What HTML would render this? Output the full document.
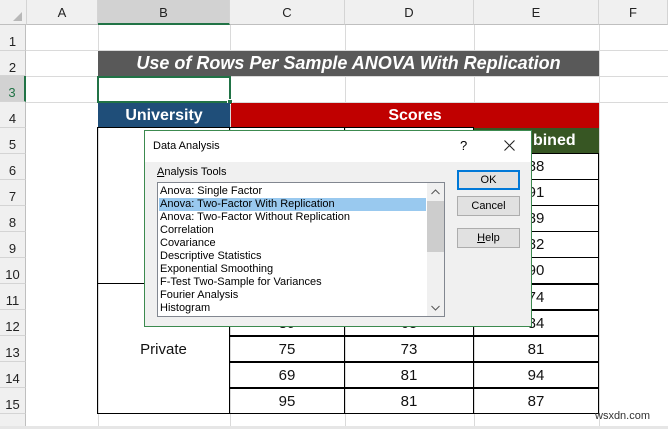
<!DOCTYPE html><html><head><style>
*{margin:0;padding:0;box-sizing:border-box}
body{width:668px;height:429px;overflow:hidden;background:#fff;position:relative;font-family:"Liberation Sans",sans-serif}
div{position:absolute}
.ch{top:0;height:25px;background:#f0f0f0;border-right:1px solid #d4d4d4;border-bottom:1px solid #bfbfbf;text-align:center;line-height:25px;font-size:13px;color:#222}
.rh{left:0;width:26px;background:#f0f0f0;border-bottom:1px solid #d4d4d4;border-right:1px solid #bfbfbf;text-align:center;font-size:13px;color:#222;padding-top:9px}
.gv{top:25px;bottom:0;width:1px;background:#dadada}
.gh{left:26px;right:0;height:1px;background:#dadada}
.c{text-align:center;font-size:15px;color:#111;border:1px solid #000;margin:-1px 0 0 -1px}
.di{font-family:"Liberation Sans",sans-serif;font-size:11px;color:#000}
.btn{left:457px;width:63px;height:20px;background:#e1e1e1;border:1px solid #adadad;text-align:center;line-height:18px;font-size:11px}
</style></head><body>
<div class="gv" style="left:98px"></div><div class="gv" style="left:230px"></div><div class="gv" style="left:345px"></div><div class="gv" style="left:474px"></div><div class="gv" style="left:599px"></div>
<div class="gh" style="top:50px"></div><div class="gh" style="top:76px"></div><div class="gh" style="top:102px"></div>
<div class="ch" style="left:0;width:27px"></div>
<div style="left:13px;top:12px;width:0;height:0;border-left:9px solid transparent;border-bottom:9px solid #b8b8b8"></div>
<div class="ch" style="left:27px;width:71px">A</div>
<div class="ch" style="left:98px;width:132px;background:#d2d2d2;border-bottom:2px solid #217346">B</div>
<div class="ch" style="left:230px;width:115px">C</div>
<div class="ch" style="left:345px;width:129px">D</div>
<div class="ch" style="left:474px;width:125px">E</div>
<div class="ch" style="left:599px;width:69px">F</div>
<div class="rh" style="top:25px;height:26px">1</div>
<div class="rh" style="top:51px;height:25px">2</div>
<div class="rh" style="top:76px;height:26px;background:#d2d2d2;border-right:2px solid #217346;color:#217346">3</div>
<div class="rh" style="top:102px;height:26px">4</div>
<div class="rh" style="top:128px;height:26px">5</div>
<div class="rh" style="top:154px;height:26px">6</div>
<div class="rh" style="top:180px;height:26px">7</div>
<div class="rh" style="top:206px;height:26px">8</div>
<div class="rh" style="top:232px;height:26px">9</div>
<div class="rh" style="top:258px;height:26px">10</div>
<div class="rh" style="top:284px;height:26px">11</div>
<div class="rh" style="top:310px;height:26px">12</div>
<div class="rh" style="top:336px;height:26px">13</div>
<div class="rh" style="top:362px;height:26px">14</div>
<div class="rh" style="top:388px;height:26px">15</div>
<div class="rh" style="top:414px;height:15px;padding-top:0"></div>
<div style="left:0;right:0;top:426px;height:3px;background:#e6e6e6"></div>
<div style="left:98px;top:51px;width:501px;height:25px;background:#595959;color:#fff;font-style:italic;font-weight:bold;font-size:18px;text-align:center;line-height:25px">Use of Rows Per Sample ANOVA With Replication</div>
<div style="left:97px;top:76px;width:134px;height:27px;border:2px solid #217346"></div>
<div style="left:227px;top:99px;width:6px;height:6px;background:#217346;border:1px solid #fff"></div>
<div style="left:98px;top:103px;width:132px;height:25px;background:#1f4e79;color:#fff;font-weight:bold;font-size:16px;text-align:center;line-height:25px">University</div>
<div style="left:231px;top:103px;width:368px;height:25px;background:#c00000;color:#fff;font-weight:bold;font-size:16px;text-align:center;line-height:25px">Scores</div>
<div style="left:474px;top:128px;width:125px;height:26px;background:#375623;color:#fff;font-weight:bold;font-size:16px;text-align:center;line-height:26px">Combined</div>
<div class="c" style="left:98px;top:128px;width:133px;height:157px"></div>
<div class="c" style="left:98px;top:284px;width:133px;height:131px;line-height:131px">Private</div>
<div style="left:474px;top:283px;width:125px;height:2px;background:#000"></div>
<div class="c" style="left:230px;top:128px;width:116px;height:27px"></div><div class="c" style="left:345px;top:128px;width:130px;height:27px"></div>
<div class="c" style="left:474px;top:154px;width:126px;height:27px;line-height:25px">88</div>
<div class="c" style="left:474px;top:180px;width:126px;height:27px;line-height:25px">91</div>
<div class="c" style="left:474px;top:206px;width:126px;height:27px;line-height:25px">89</div>
<div class="c" style="left:474px;top:232px;width:126px;height:27px;line-height:25px">82</div>
<div class="c" style="left:474px;top:258px;width:126px;height:27px;line-height:25px">90</div>
<div class="c" style="left:474px;top:285px;width:126px;height:26px;line-height:25px">74</div>
<div class="c" style="left:474px;top:311px;width:126px;height:26px;line-height:25px">84</div>
<div class="c" style="left:230px;top:311px;width:116px;height:26px;line-height:25px">89</div>
<div class="c" style="left:345px;top:311px;width:130px;height:26px;line-height:25px">65</div>
<div class="c" style="left:230px;top:337px;width:116px;height:26px;line-height:25px">75</div>
<div class="c" style="left:345px;top:337px;width:130px;height:26px;line-height:25px">73</div>
<div class="c" style="left:474px;top:337px;width:126px;height:26px;line-height:25px">81</div>
<div class="c" style="left:230px;top:363px;width:116px;height:26px;line-height:25px">69</div>
<div class="c" style="left:345px;top:363px;width:130px;height:26px;line-height:25px">81</div>
<div class="c" style="left:474px;top:363px;width:126px;height:26px;line-height:25px">94</div>
<div class="c" style="left:230px;top:389px;width:116px;height:26px;line-height:25px">95</div>
<div class="c" style="left:345px;top:389px;width:130px;height:26px;line-height:25px">81</div>
<div class="c" style="left:474px;top:389px;width:126px;height:26px;line-height:25px">87</div>
<div class="c" style="left:230px;top:154px;width:116px;height:131px"></div>
<div class="c" style="left:345px;top:154px;width:130px;height:131px"></div>
<div class="di" style="left:144px;top:130px;width:388px;height:197px;background:#f0f0f0;border:1px solid #3c8a4f">
 <div style="left:0;top:0;width:386px;height:31px;background:#fff"></div>
 <div style="left:8px;top:9px;font-size:11px">Data Analysis</div>
 <div style="left:315px;top:7px;font-size:13px">?</div>
 <svg style="position:absolute;left:359px;top:9px" width="11" height="11"><path d="M0.5 0.5L10.5 10.5M10.5 0.5L0.5 10.5" stroke="#222" stroke-width="1.1"/></svg>
 <div style="left:12px;top:35px"><u>A</u>nalysis Tools</div>
 <div style="left:12px;top:51px;width:288px;height:135px;background:#fff;border:1px solid #828790">
  <div style="left:2px;top:2px;width:266px;line-height:13px">Anova: Single Factor<br><span style="display:block;background:#99c9ef;margin-left:-1px;padding-left:1px">Anova: Two-Factor With Replication</span>Anova: Two-Factor Without Replication<br>Correlation<br>Covariance<br>Descriptive Statistics<br>Exponential Smoothing<br>F-Test Two-Sample for Variances<br>Fourier Analysis<br>Histogram</div>
  <div style="left:269px;top:0;width:17px;height:133px;background:#f0f0f0"></div>
  <div style="left:269px;top:18px;width:17px;height:51px;background:#cdcdcd"></div>
  <svg style="position:absolute;left:273px;top:6px" width="9" height="6"><path d="M0.5 5L4.5 1L8.5 5" stroke="#555" fill="none"/></svg>
  <svg style="position:absolute;left:273px;top:122px" width="9" height="6"><path d="M0.5 1L4.5 5L8.5 1" stroke="#555" fill="none"/></svg>
 </div>
 <div class="btn" style="left:312px;top:39px;border:2px solid #0078d7;line-height:16px">OK</div>
 <div class="btn" style="left:312px;top:65px">Cancel</div>
 <div class="btn" style="left:312px;top:97px"><u>H</u>elp</div>
</div>
<div style="left:595px;top:410px;font-size:11px;color:#333">wsxdn.com</div>
</body></html>
